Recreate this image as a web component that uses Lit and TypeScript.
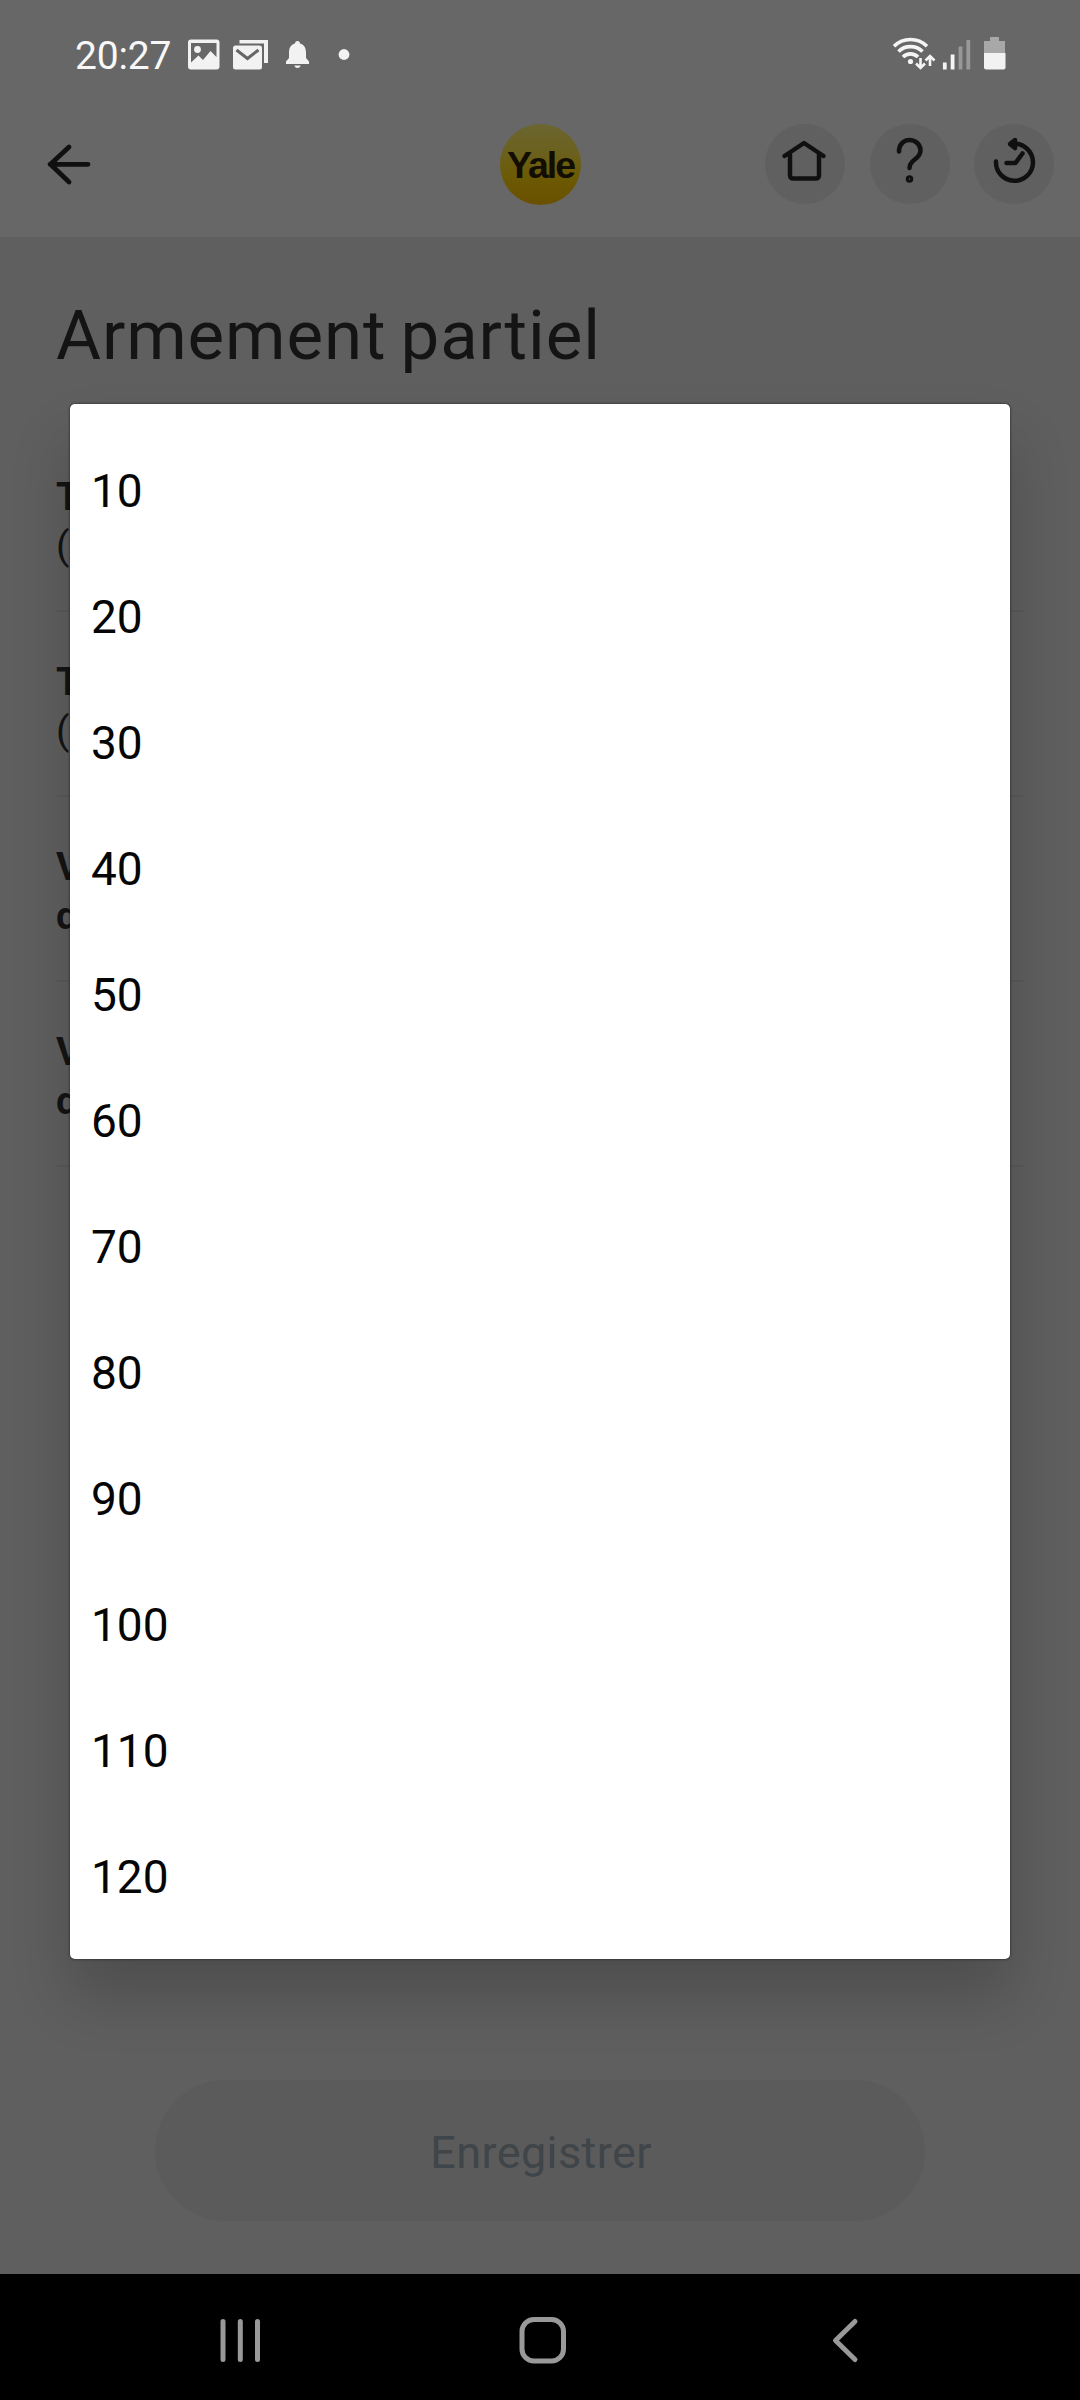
import { LitElement, html, css } from "lit";
import { customElement, property } from "lit/decorators.js";

const OPTIONS = [10, 20, 30, 40, 50, 60, 70, 80, 90, 100, 110, 120];

const ROWS = [
  { first: "T", second: "(", strong: false },
  { first: "T", second: "(", strong: false },
  { first: "V", second: "d", strong: true },
  { first: "V", second: "d", strong: true },
];

@customElement("status-bar")
class StatusBar extends LitElement {
  static styles = css`
    :host {
      display: flex;
      justify-content: space-between;
      height: 90px;
      box-sizing: border-box;
      padding: 34px 70px 16px 75px;
      color: #f8f8f8;
    }
    .group {
      display: flex;
      align-items: center;
      height: 40px;
    }
    .time {
      width: 109px;
      font: 400 39px/42px Roboto, "Liberation Sans", sans-serif;
      letter-spacing: -0.2px;
      padding-top: 3px;
    }
    svg {
      display: block;
    }
  `;
  render() {
    return html`
      <div class="group">
        <span class="time">20:27</span>
        <svg width="176" height="40" viewBox="184 34 176 40" fill="#f2f2f2">
          <path fill-rule="evenodd" d="M191 39.5h25.500a3 3 0 0 1 3 3v24a3 3 0 0 1-3 3H191a3 3 0 0 1-3-3v-24a3 3 0 0 1 3-3zM191 43v19.500l7.500-7 4.500 4.500 7.500-9 6 6V43z" />
          <circle cx="197.500" cy="49.500" r="3.400" />
          <path d="M239.500 40H268v23h-4V43.500h-24.500z" />
          <path d="M235.500 45.500h24a2.500 2.500 0 0 1 2.500 2.500v19a2.500 2.500 0 0 1-2.500 2.500h-24a2.500 2.500 0 0 1-2.500-2.500V48a2.500 2.500 0 0 1 2.500-2.500z" />
          <path d="M236.500 50l11 8.500 11-8.500" fill="none" stroke="#676767" stroke-width="3" />
          <path d="M297.500 41c1.700 0 2.500 1 2.500 2.400 4.300 1.300 6 4.600 6 9v5.600l3 3.500V64h-23v-2.500l3-3.500v-5.600c0-4.400 1.700-7.700 6-9 0-1.400.8-2.400 2.500-2.400zM294.500 65.500h6c0 1.500-1.300 2.500-3 2.500s-3-1-3-2.500z" />
          <circle cx="344" cy="54.500" r="5.400" />
        </svg>
      </div>
      <svg width="122" height="40" viewBox="888 34 122 40" fill="none" stroke="#f4f4f4">
        <g stroke-width="3.600">
          <path d="M894 46.200a23.500 23.500 0 0 1 33 0" />
          <path d="M898.500 51.600a17 17 0 0 1 24 0" />
          <path d="M903 57a10.500 10.500 0 0 1 15 0" />
        </g>
        <circle cx="910.500" cy="61.500" r="2.600" fill="#f4f4f4" stroke="none" />
        <g stroke-width="2.600">
          <path d="M920.500 58v9M916 63.500l4.500 4.500 4.500-4.500M930 66v-9M925.500 60.500l4.500-4.500 4.500 4.500" />
        </g>
        <g stroke-width="3.800">
          <path d="M944.800 62.500v7M952.600 54.500v15" />
          <path d="M960.500 46.500v23M968.300 40v29.500" stroke="#989898" />
        </g>
        <g stroke="none">
          <path fill="#a8a8a8" d="M990 37h9v4h6v12h-21V41h6z" />
          <path fill="#f2f2f2" d="M984 53h21.500v14.500a2 2 0 0 1-2 2H986a2 2 0 0 1-2-2z" />
        </g>
      </svg>
    `;
  }
}

@customElement("app-bar")
class AppBar extends LitElement {
  static styles = css`
    :host {
      display: grid;
      grid-template-columns: 456px 81px 1fr;
      align-items: center;
      height: 148px;
      box-sizing: border-box;
      padding: 0 26px 0 44px;
    }
    svg {
      display: block;
      fill: none;
      stroke: #101010;
      stroke-width: 4.5;
      stroke-linecap: round;
      stroke-linejoin: round;
    }
    .brand {
      display: flex;
      align-items: center;
      justify-content: center;
      box-sizing: border-box;
      width: 81px;
      height: 81px;
      padding-top: 2px;
      border-radius: 50%;
      background: linear-gradient(#6b6530 0%, #6b611e 35%, #6c5a04 65%, #6a5000 100%);
      color: #120e04;
      font: 700 37.5px/40px "Liberation Sans", Arial, sans-serif;
      letter-spacing: -2px;
      text-indent: 0;
    }
    .actions {
      display: flex;
      justify-content: flex-end;
      gap: 24.5px;
    }
    .action {
      width: 80px;
      height: 80px;
      border-radius: 50%;
      background: #606060;
    }
    .solid {
      fill: #101010;
    }
  `;
  render() {
    return html`
      <svg width="50" height="50" viewBox="44 139 50 50">
        <path d="M88 164.300H50M69 147L50.500 164.300 69 182" stroke-width="4.800" />
      </svg>
      <div class="brand">Yale</div>
      <div class="actions">
        <div class="action">
          <svg width="80" height="80" viewBox="765 124 80 80">
            <path d="M784.500 156l19.500-13 19.500 13M790 154v21.500a3 3 0 0 0 3 3h23a3 3 0 0 0 3-3V154" />
          </svg>
        </div>
        <div class="action">
          <svg width="80" height="80" viewBox="870 124 80 80">
            <path d="M899 151.500c0-7 4.500-11.500 10.500-11.500s11 4.500 11 10.500c0 9-11 8.500-11 17.500" />
            <circle cx="909.500" cy="179" r="1.500" />
          </svg>
        </div>
        <div class="action">
          <svg width="80" height="80" viewBox="973.500 124 80 80">
            <path d="M995.500 161.500a18.500 18.500 0 1 0 18.500-17.700M1006 163h9l7-9.500" />
            <path class="solid" d="M1014.500 140l-5 4 5 4z" />
          </svg>
        </div>
      </div>
    `;
  }
}

@customElement("option-list")
class OptionList extends LitElement {
  @property({ attribute: false }) options: number[] = [];
  static styles = css`
    :host {
      display: flex;
      flex-direction: column;
      box-sizing: border-box;
      padding: 24px 21px 19px;
      border-radius: 5px;
      background: #fff;
      box-shadow: 0 0 2px 1px rgba(0, 0, 0, 0.3), 0 37px 60px rgba(0, 0, 0, 0.19);
    }
    .option {
      height: 126px;
      color: #050505;
      font: 400 46px/126px Roboto, "Liberation Sans", sans-serif;
    }
  `;
  render() {
    return this.options.map((o) => html`<div class="option">${o}</div>`);
  }
}

@customElement("nav-bar")
class NavBar extends LitElement {
  static styles = css`
    :host {
      display: grid;
      grid-template-columns: 480px 126px 474px;
      align-items: center;
      justify-items: center;
      height: 126px;
      background: #000;
    }
    svg {
      fill: none;
      stroke: #999;
      stroke-width: 5;
      stroke-linecap: round;
      stroke-linejoin: round;
    }
  `;
  render() {
    return html`
      <svg width="50" height="60" viewBox="215 2307 50 60">
        <path d="M223 2321.500v38M240.300 2321.500v38M257.500 2321.500v38" />
      </svg>
      <svg width="60" height="60" viewBox="513 2307 60 60">
        <rect x="522" y="2319.500" width="41.500" height="41.500" rx="12" />
      </svg>
      <svg width="40" height="60" viewBox="823 2307 40 60">
        <path d="M855 2321.500l-19.500 19 19.500 19" />
      </svg>
    `;
  }
}

@customElement("app-root")
class AppRoot extends LitElement {
  static styles = css`
    :host {
      display: flex;
      flex-direction: column;
      position: relative;
      width: 1080px;
      height: 2400px;
      overflow: hidden;
      background: #5f5f5f;
      color: #141414;
      font-family: Roboto, "Liberation Sans", sans-serif;
    }
    .header {
      height: 237px;
      background: #676767;
    }
    .content {
      flex: 1;
      display: flex;
      flex-direction: column;
      padding: 0 56px;
    }
    h1 {
      margin: 54px 0 0;
      height: 136px;
      font: 400 69px/90px Roboto, "Liberation Sans", sans-serif;
      letter-spacing: 0.9px;
      word-spacing: -4px;
      white-space: nowrap;
    }
    .row {
      height: 185px;
      box-sizing: border-box;
      padding-top: 46px;
      border-bottom: 2px solid #595959;
      font-size: 39px;
      line-height: 49px;
    }
    .strong {
      font-weight: 700;
    }
    .save {
      display: flex;
      align-items: center;
      justify-content: center;
      align-self: center;
      box-sizing: border-box;
      width: 770px;
      height: 141px;
      padding: 3px 0 0 2px;
      margin-top: auto;
      margin-bottom: 53px;
      border-radius: 71px;
      background: #5b5b5b;
      color: #3f4549;
      font-size: 45px;
      letter-spacing: 0.4px;
    }
    .dialog {
      position: absolute;
      left: 70px;
      top: 404px;
      width: 940px;
    }
  `;
  render() {
    return html`
      <div class="header">
        <status-bar></status-bar>
        <app-bar></app-bar>
      </div>
      <div class="content">
        <h1>Armement partiel</h1>
        ${ROWS.map(
          (r) => html`<div class="row">
            <div class="strong">${r.first}</div>
            <div class=${r.strong ? "strong" : ""}>${r.second}</div>
          </div>`
        )}
        <div class="save">Enregistrer</div>
      </div>
      <nav-bar></nav-bar>
      <option-list class="dialog" .options=${OPTIONS}></option-list>
    `;
  }
}
